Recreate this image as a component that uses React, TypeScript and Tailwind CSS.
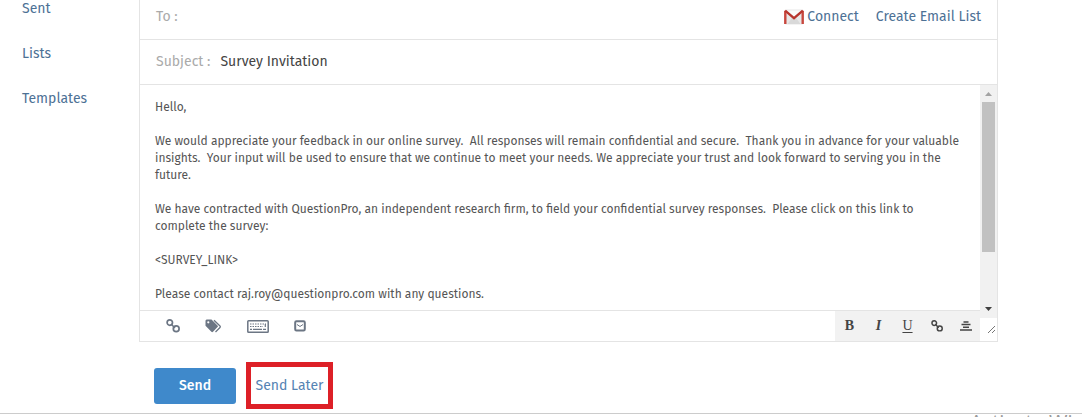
import React from "react";
import clsx from "clsx";

const folders = ["Sent", "Lists", "Templates"];

const message = `Hello,

We would appreciate your feedback in our online survey.  All responses will remain confidential and secure.  Thank you in advance for your valuable insights.  Your input will be used to ensure that we continue to meet your needs. We appreciate your trust and look forward to serving you in the future.

We have contracted with QuestionPro, an independent research firm, to field your confidential survey responses.  Please click on this link to complete the survey:

<SURVEY_LINK>

Please contact raj.roy@questionpro.com with any questions.`;

function GmailIcon() {
  return (
    <svg width="20" height="16" viewBox="0 0 20 16" aria-hidden="true">
      <rect x="1" y=".5" width="18" height="15" rx="1" fill="#e8e8e8" />
      <path d="M3.500 15 8 9l2 1.500L12 9l4.500 6z" fill="#d9d9d9" />
      <path d="M3 1.500h14l-7 6.500z" fill="#fafafa" />
      <path d="M1.300 15V1.800M18.700 15V1.800" stroke="#c8473e" strokeWidth="2.400" />
      <path d="M1.200 1.600 10 9.200l8.800-7.600" fill="none" stroke="#b8352d" strokeWidth="2.200" />
    </svg>
  );
}

function LinkIcon({ size }: { size: number }) {
  return (
    <svg width={size} height={size} viewBox="0 0 14 14" fill="none" stroke="currentColor" aria-hidden="true">
      <circle cx="3.800" cy="3.600" r="2.700" strokeWidth="1.700" />
      <circle cx="10.200" cy="9.800" r="2.900" strokeWidth="1.700" />
      <path d="m5 5 4 4" strokeWidth="1.600" />
    </svg>
  );
}

function TagsIcon() {
  return (
    <svg width="17" height="14" viewBox="0 0 17 14" aria-hidden="true">
      <path
        fillRule="evenodd"
        d="M.5 1.500 1.500.5h5l6 6c.6.600.6 1 0 1.600L8 12.800c-.6.600-1 .6-1.600 0L.5 6.700zM3.300 2.200a1.100 1.100 0 1 0 0 2.200 1.100 1.100 0 0 0 0-2.200z"
        fill="currentColor"
      />
      <path d="M9 1.200 15 7c.5.500.5 1 0 1.500l-4.500 4.500" fill="none" stroke="currentColor" strokeWidth="1.300" />
    </svg>
  );
}

function KeyboardIcon() {
  return (
    <svg width="22" height="13" viewBox="0 0 22 13" fill="none" stroke="currentColor" aria-hidden="true">
      <rect x=".8" y=".8" width="20.400" height="11.400" rx=".8" strokeWidth="1.500" />
      <path d="M3 4h16M3 6.500h13" strokeWidth="1.200" strokeDasharray="1.500 1" />
      <path d="M3 9.300h2M6 9.300h9M16 9.300h3M18.300 4v3" strokeWidth="1.200" />
    </svg>
  );
}

function EnvelopeIcon() {
  return (
    <svg width="12" height="12" viewBox="0 0 12 12" fill="none" stroke="currentColor" aria-hidden="true">
      <rect x="1.200" y="1.200" width="9.600" height="9.200" rx="1.200" strokeWidth="2" />
      <path d="m3 4.500 3 2 3-2" strokeWidth="1" />
    </svg>
  );
}

function AlignIcon() {
  return (
    <svg width="12" height="10" viewBox="0 0 12 10" stroke="currentColor" strokeWidth="1.500" aria-hidden="true">
      <path d="M3.500 1h5M1.500 3.500h9M3 6.200h6M0 9h12" />
    </svg>
  );
}

function IconButton({ label, className, children }: { label: string; className?: string; children: React.ReactNode }) {
  return (
    <button type="button" aria-label={label} className={clsx("flex items-center justify-center", className)}>
      {children}
    </button>
  );
}

export default function App() {
  return (
    <div className="overflow-hidden bg-white font-['Fira_Sans','Roboto',sans-serif] text-sm text-[#444]">
      <div className="flex border-b border-[#ccc] pb-1">
        <nav className="-mt-px flex w-[139px] shrink-0 flex-col gap-[25px] pl-[22px]">
          {folders.map((name) => (
            <a key={name} href="#" className="leading-5 text-[#4d7195]">
              {name}
            </a>
          ))}
        </nav>

        <main className="mr-[84px] min-w-0 flex-1">
          <form>
            <div className="border-x border-b border-[#e4e4e4]">
              <div className="flex h-10 items-center border-b border-[#e4e4e4] px-4 pb-[6px]">
                <label htmlFor="to" className="text-[#aaa]">To :</label>
                <input id="to" className="ml-2 min-w-0 flex-1 outline-none" />
                <a href="#" className="flex items-center gap-[3px] text-[#4d7195]">
                  <GmailIcon />
                  Connect
                </a>
                <a href="#" className="ml-[17px] text-[#4d7195]">Create Email List</a>
              </div>
              <div className="flex h-[45px] items-center border-b border-[#e4e4e4] pl-4">
                <label htmlFor="subject" className="text-[#aaa]">Subject :</label>
                <input id="subject" defaultValue="Survey Invitation" className="ml-[10px] min-w-0 flex-1 text-[#444] outline-none" />
              </div>

              <div className="flex">
                <div className="min-w-0 flex-1">
                  <textarea
                    aria-label="Message"
                    defaultValue={message}
                    className="block h-[225px] w-full resize-none overflow-hidden pb-1 pl-[15px] pr-[17px] pt-[14px] text-xs leading-[17px] text-[#555] outline-none"
                  />
                  <div className="flex h-[31px] items-stretch justify-between border-t border-[#e4e4e4]">
                    <div className="flex items-center gap-[25px] pl-[26px] text-[#6c7684]">
                      <IconButton label="Insert link"><LinkIcon size={14} /></IconButton>
                      <IconButton label="Insert tag"><TagsIcon /></IconButton>
                      <IconButton label="Keyboard"><KeyboardIcon /></IconButton>
                      <IconButton label="Email"><EnvelopeIcon /></IconButton>
                    </div>
                    <div className="flex items-center bg-[#f2f2f2] font-['Liberation_Serif',serif] text-sm text-[#444]">
                      <IconButton label="Bold" className="w-[29px] font-bold">B</IconButton>
                      <IconButton label="Italic" className="w-[29px] font-bold italic">I</IconButton>
                      <IconButton label="Underline" className="w-[29px] underline underline-offset-2">U</IconButton>
                      <IconButton label="Link" className="w-[29px]"><LinkIcon size={12} /></IconButton>
                      <IconButton label="Align" className="w-[29px]"><AlignIcon /></IconButton>
                    </div>
                  </div>
                </div>

                <div className="flex w-[17px] shrink-0 flex-col">
                  <div className="flex flex-1 flex-col items-center justify-between bg-[#f1f1f1]">
                    <svg width="17" height="17" viewBox="0 0 17 17" aria-hidden="true">
                      <path d="M5 11h7L8.500 7z" fill="#a3a3a3" />
                    </svg>
                    <div className="mb-auto h-[150px] w-[13px] bg-[#c1c1c1]" />
                    <svg width="17" height="17" viewBox="0 0 17 17" aria-hidden="true">
                      <path d="M5 6h7l-3.500 4z" fill="#404040" />
                    </svg>
                  </div>
                  <svg width="17" height="23" viewBox="0 0 17 23" stroke="#777" aria-hidden="true">
                    <path d="m8 15 7-7M12 15l3-3" />
                  </svg>
                </div>
              </div>
            </div>

            <div className="mt-5 flex items-center pl-[15px]">
              <button type="button" className="h-9 w-[82px] rounded-[3px] bg-[#3f89cb] font-medium text-white">
                Send
              </button>
              <a
                href="#"
                className="ml-[10px] flex h-[47px] w-[87px] items-center justify-center border-5 border-[#dd2027] text-[#5583b3]"
              >
                Send Later
              </a>
            </div>
          </form>
        </main>
      </div>
      <div className="flex h-[3px] justify-end overflow-hidden">
        <p className="w-28 shrink-0 overflow-hidden whitespace-nowrap font-['Open_Sans',sans-serif] text-xl leading-4 text-[#999]">
          Activate Windows
        </p>
      </div>
    </div>
  );
}
